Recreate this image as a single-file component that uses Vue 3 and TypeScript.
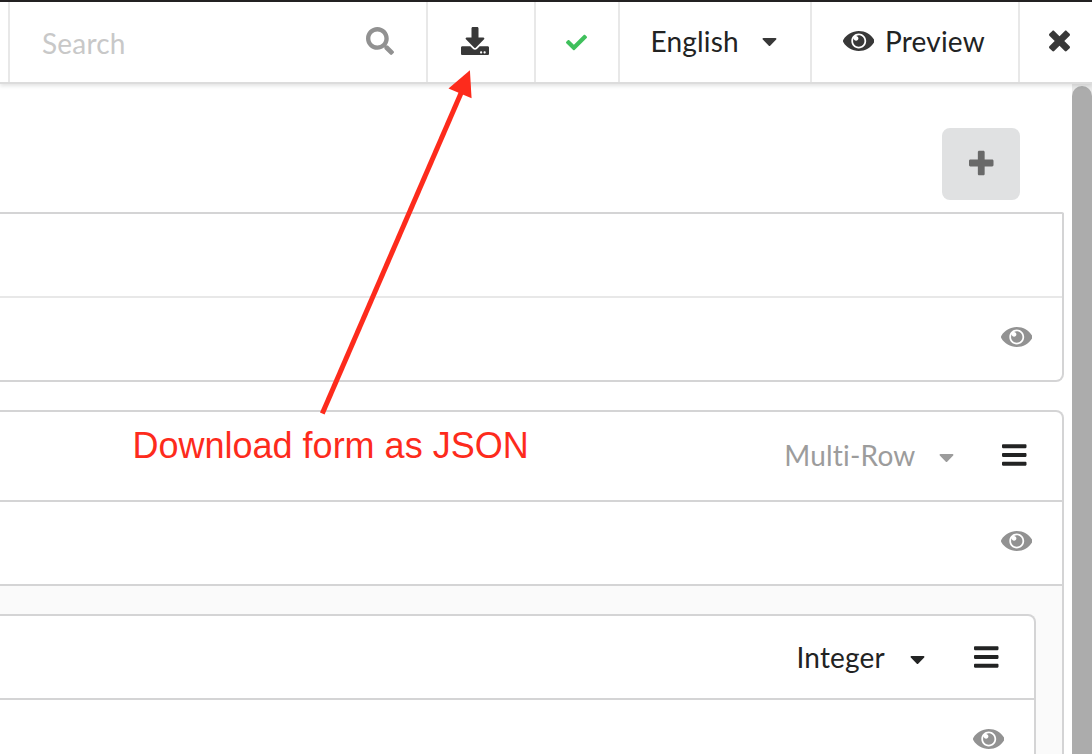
<script setup lang="ts">
import { h, type FunctionalComponent } from 'vue'

interface Glyph {
  width: number
  path: string
}

const glyphs: Record<string, Glyph> = {
  search: {
    width: 512,
    path: 'M505 442.7L405.3 343c-4.5-4.5-10.6-7-17-7H372c27.6-35.3 44-79.7 44-128C416 93.1 322.9 0 208 0S0 93.1 0 208s93.1 208 208 208c48.3 0 92.7-16.4 128-44v16.3c0 6.4 2.5 12.5 7 17l99.7 99.7c9.4 9.4 24.6 9.4 33.9 0l28.3-28.3c9.4-9.4 9.4-24.6.1-34zM208 336c-70.7 0-128-57.2-128-128 0-70.7 57.2-128 128-128 70.7 0 128 57.2 128 128 0 70.7-57.2 128-128 128z',
  },
  download: {
    width: 512,
    path: 'M216 0h80c13.3 0 24 10.7 24 24v168h87.7c17.8 0 26.7 21.5 14.1 34.1L269.7 378.3c-7.5 7.5-19.8 7.5-27.3 0L90.1 226.1c-12.6-12.6-3.7-34.1 14.1-34.1H192V24c0-13.3 10.7-24 24-24zm296 376v112c0 13.3-10.7 24-24 24H24c-13.3 0-24-10.7-24-24V376c0-13.3 10.7-24 24-24h146.7l49 49c20.1 20.1 52.5 20.1 72.6 0l49-49H488c13.3 0 24 10.7 24 24zm-124 88c0-11-9-20-20-20s-20 9-20 20 9 20 20 20 20-9 20-20zm64 0c0-11-9-20-20-20s-20 9-20 20 9 20 20 20 20-9 20-20z',
  },
  check: {
    width: 512,
    path: 'M173.898 439.404l-166.4-166.4c-9.997-9.997-9.997-26.206 0-36.204l36.203-36.204c9.997-9.998 26.207-9.998 36.204 0L192 312.69 432.095 72.596c9.997-9.997 26.207-9.997 36.204 0l36.203 36.204c9.997 9.997 9.997 26.206 0 36.204l-294.4 294.401c-9.998 9.997-26.207 9.997-36.204-.001z',
  },
  caret: {
    width: 320,
    path: 'M31.3 192h257.3c17.8 0 26.7 21.5 14.1 34.1L174.1 354.8c-7.8 7.8-20.5 7.8-28.3 0L17.2 226.1C4.6 213.5 13.5 192 31.3 192z',
  },
  eye: {
    width: 576,
    path: 'M569.354 231.631C512.969 135.949 407.81 72 288 72 168.14 72 63.004 135.994 6.646 231.631a47.999 47.999 0 0 0 0 48.739C63.031 376.051 168.19 440 288 440c119.86 0 224.996-63.994 281.354-159.631a47.997 47.997 0 0 0 0-48.738zM288 392c-75.162 0-136-60.827-136-136 0-75.162 60.826-136 136-136 75.162 0 136 60.826 136 136 0 75.162-60.826 136-136 136zm104-136c0 57.438-46.562 104-104 104s-104-46.562-104-104c0-17.708 4.431-34.379 12.236-48.973l-.001.032c0 23.651 19.173 42.823 42.824 42.823s42.824-19.173 42.824-42.823c0-23.651-19.173-42.824-42.824-42.824l-.032.001C253.621 156.431 270.292 152 288 152c57.438 0 104 46.562 104 104z',
  },
  close: {
    width: 384,
    path: 'M323.1 441l53.9-53.9c9.4-9.4 9.4-24.5 0-33.9L279.8 256l97.2-97.2c9.4-9.4 9.4-24.5 0-33.9L323.1 71c-9.4-9.4-24.5-9.4-33.9 0L192 168.2 94.8 71c-9.4-9.4-24.5-9.4-33.9 0L7 124.9c-9.4 9.4-9.4 24.5 0 33.9l97.2 97.2L7 353.2c-9.4 9.4-9.4 24.5 0 33.9L60.9 441c9.4 9.4 24.5 9.4 33.9 0l97.2-97.2 97.2 97.2c9.3 9.3 24.5 9.3 33.9 0z',
  },
  plus: {
    width: 448,
    path: 'M448 294.2v-76.4c0-13.3-10.7-24-24-24H286.2V56c0-13.3-10.7-24-24-24h-76.4c-13.3 0-24 10.7-24 24v137.8H24c-13.3 0-24 10.7-24 24v76.4c0 13.3 10.7 24 24 24h137.8V456c0 13.3 10.7 24 24 24h76.4c13.3 0 24-10.7 24-24V318.2H424c13.3 0 24-10.7 24-24z',
  },
  bars: {
    width: 448,
    path: 'M16 132h416c8.837 0 16-7.163 16-16V76c0-8.837-7.163-16-16-16H16C7.163 60 0 67.163 0 76v40c0 8.837 7.163 16 16 16zm0 160h416c8.837 0 16-7.163 16-16v-40c0-8.837-7.163-16-16-16H16c-8.837 0-16 7.163-16 16v40c0 8.837 7.163 16 16 16zm0 160h416c8.837 0 16-7.163 16-16v-40c0-8.837-7.163-16-16-16H16c-8.837 0-16 7.163-16 16v40c0 8.837 7.163 16 16 16z',
  },
}

const Icon: FunctionalComponent<{ name: string; size?: number }> = (props) => {
  const glyph = glyphs[props.name]
  const size = props.size ?? 28
  return h(
    'svg',
    { viewBox: `0 0 ${glyph.width} 512`, width: (size * glyph.width) / 512, height: size, fill: 'currentColor' },
    [h('path', { d: glyph.path })],
  )
}
Icon.props = ['name', 'size']
</script>

<template>
  <div class="screen">
    <header class="toolbar">
      <div class="cell stub"></div>
      <div class="cell search">
        <span class="placeholder">Search</span>
        <Icon name="search" />
      </div>
      <div class="cell download"><Icon name="download" /></div>
      <div class="cell status"><Icon name="check" :size="21" /></div>
      <div class="cell language">
        <span class="label">English</span>
        <Icon name="caret" :size="24" />
      </div>
      <div class="cell preview">
        <Icon name="eye" />
        <span class="label">Preview</span>
      </div>
      <div class="cell close"><Icon name="close" /></div>
    </header>

    <div class="body">
      <main class="content">
        <div class="actions">
          <button class="add" type="button"><Icon name="plus" /></button>
        </div>

        <section class="card first">
          <div class="row light"></div>
          <div class="row view"><Icon name="eye" class="muted" /></div>
        </section>

        <section class="card group">
          <div class="row head">
            <span class="type faded">Multi-Row<Icon name="caret" :size="24" class="caret" /></span>
            <Icon name="bars" class="menu" />
          </div>
          <div class="row view"><Icon name="eye" class="muted" /></div>
          <div class="nest">
            <div class="card field">
              <div class="row inner">
                <span class="type">Integer<Icon name="caret" :size="24" class="caret" /></span>
                <Icon name="bars" class="menu" />
              </div>
              <div class="row last"><Icon name="eye" class="muted" /></div>
            </div>
          </div>
        </section>
      </main>
      <div class="track"><div class="thumb"></div></div>
    </div>

    <svg class="arrow" width="170" height="360" viewBox="310 62 170 360">
      <path d="M322.3 413.4L461.5 92" stroke="#fd2b1c" stroke-width="5" />
      <path d="M469.9 70.3L448.5 88.5L471.6 98.2z" fill="#fd2b1c" />
    </svg>
    <div class="note">Download form as JSON</div>
  </div>
</template>

<style>
body {
  margin: 0;
  overflow: hidden;
}
</style>

<style scoped>
.screen {
  position: relative;
  box-sizing: border-box;
  width: 1092px;
  height: 754px;
  overflow: hidden;
  border-top: 2px solid #232122;
  background: #fff;
  color: #222323;
  font: 28px/40px Lato, "Liberation Sans", sans-serif;
  font-variant-ligatures: none;
  letter-spacing: 0.2px;
}
svg {
  display: block;
  flex: none;
}
.toolbar {
  position: relative;
  z-index: 1;
  box-sizing: border-box;
  display: flex;
  height: 82px;
  border-bottom: 2px solid #dcdcdc;
  background: #fff;
  box-shadow: 0 2px 4px rgba(34, 36, 38, 0.13);
}
.cell {
  box-sizing: border-box;
  display: flex;
  align-items: center;
  flex: none;
  padding-bottom: 2px;
  border-right: 2px solid #e8e8e8;
  color: #383838;
}
.label {
  color: #222323;
}
.stub {
  width: 10px;
}
.search {
  width: 418px;
  padding: 0 32px 2px;
  justify-content: space-between;
  color: #919191;
}
.placeholder {
  padding-top: 4px;
  color: #c8c8c8;
}
.download {
  width: 108px;
  padding-left: 33px;
}
.status {
  width: 84px;
  padding: 0 0 0 30px;
  color: #3fc05c;
}
.language {
  width: 192px;
  padding: 0 33.5px 2px 30.5px;
  justify-content: space-between;
}
.preview {
  width: 208px;
  padding-left: 30.5px;
  gap: 11px;
}
.close {
  width: 72px;
  padding-left: 29px;
  border-right: 0;
}
.body {
  display: flex;
  justify-content: space-between;
  height: 670px;
}
.content {
  width: 1064px;
}
.actions {
  display: flex;
  justify-content: flex-end;
  padding: 44px 44px 12px 0;
}
.add {
  display: flex;
  align-items: center;
  justify-content: center;
  width: 78px;
  height: 72px;
  padding: 0 0 2px 1px;
  border: 0;
  border-radius: 8px;
  background: #e0e1e2;
  color: #696969;
}
.card {
  border: 2px solid #d4d4d5;
  border-left: 0;
  border-radius: 0 8px 8px 0;
  background: #fff;
}
.first {
  margin-bottom: 28px;
  border-radius: 0 2px 8px 0;
}
.group {
  overflow: hidden;
}
.row {
  box-sizing: border-box;
  display: flex;
  align-items: center;
  justify-content: flex-end;
  height: 82px;
  padding-right: 30px;
}
.view {
  padding-bottom: 4px;
}
.light {
  height: 84px;
  border-bottom: 2px solid #e8e8e8;
}
.head {
  height: 90px;
  padding-bottom: 2px;
  border-bottom: 2px solid #d4d4d5;
}
.inner {
  height: 84px;
  border-bottom: 2px solid #d4d4d5;
}
.last {
  height: 78px;
}
.muted {
  color: #929292;
}
.type {
  display: flex;
  align-items: center;
}
.faded {
  color: #9c9c9c;
}
.caret {
  margin: 4px 48px 0 23.5px;
}
.inner .caret {
  margin: 4px 49.5px 0 24.5px;
}
.menu {
  margin-right: 5.5px;
}
.nest {
  padding: 28px 26px 0 0;
  border-top: 2px solid #d4d4d5;
  background: #fafafa;
}
.track {
  width: 20px;
  padding-top: 2px;
  background: #e9e9e9;
}
.thumb {
  height: 680px;
  border-radius: 10px;
  background: #acacac;
}
.arrow {
  position: absolute;
  z-index: 2;
  left: 310px;
  top: 60px;
}
.note {
  position: absolute;
  z-index: 2;
  left: 132.5px;
  top: 423px;
  color: #fd2b1c;
  font: 36px/42px "Liberation Sans", Arial, sans-serif;
  white-space: nowrap;
  letter-spacing: 0;
}
</style>
